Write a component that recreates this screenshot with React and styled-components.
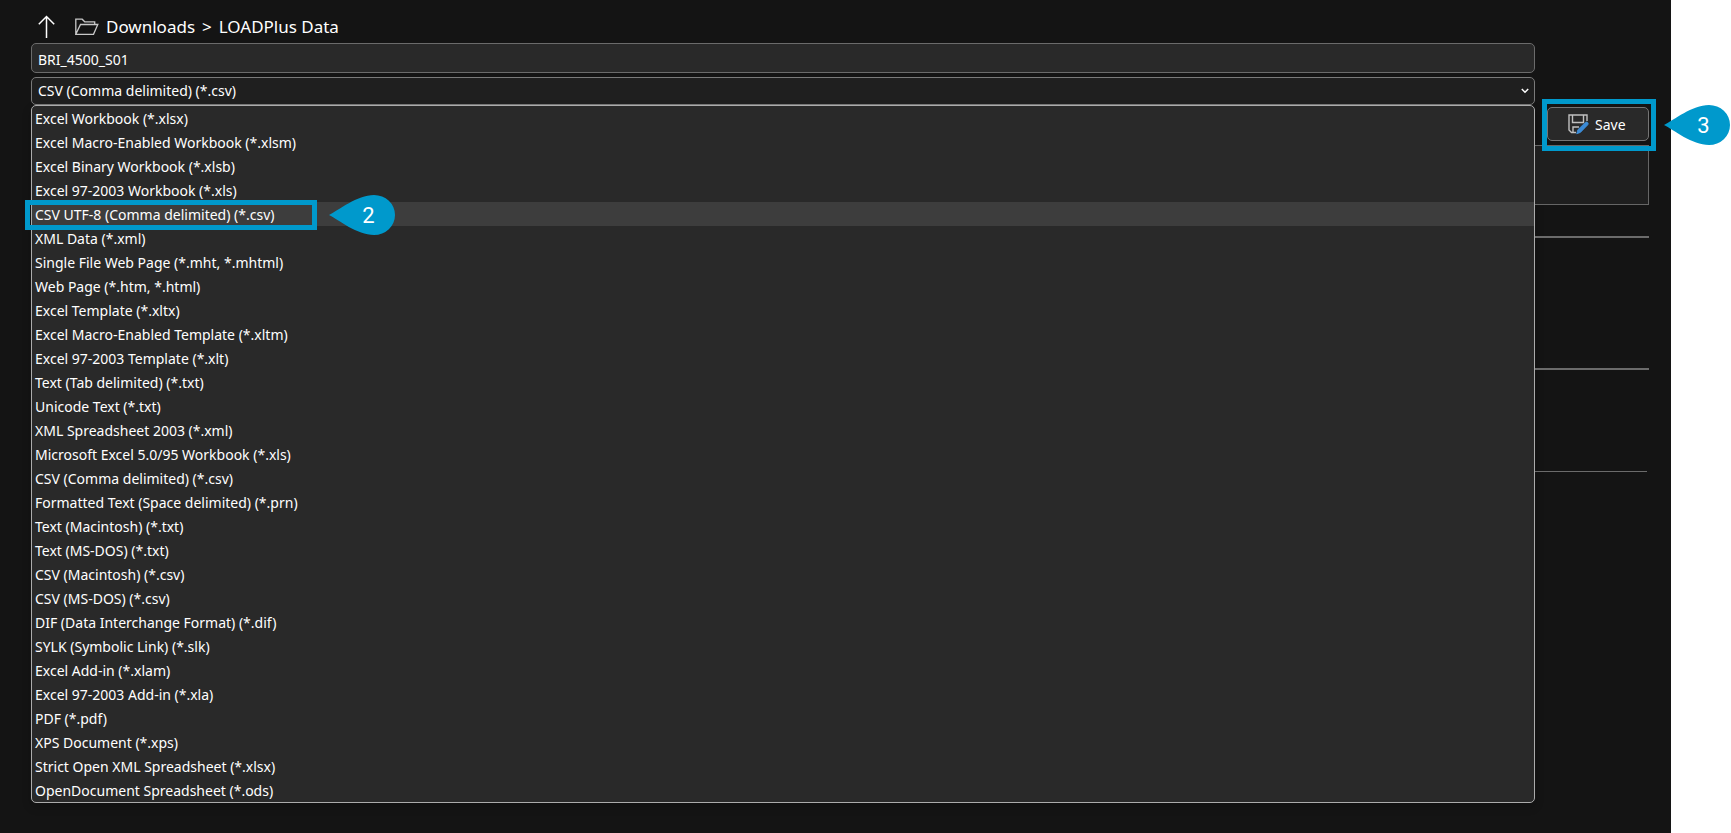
import styled, { createGlobalStyle } from "styled-components";
import { useState } from "react";

const fileTypes = [
    "Excel Workbook (*.xlsx)",
    "Excel Macro-Enabled Workbook (*.xlsm)",
    "Excel Binary Workbook (*.xlsb)",
    "Excel 97-2003 Workbook (*.xls)",
    "CSV UTF-8 (Comma delimited) (*.csv)",
    "XML Data (*.xml)",
    "Single File Web Page (*.mht, *.mhtml)",
    "Web Page (*.htm, *.html)",
    "Excel Template (*.xltx)",
    "Excel Macro-Enabled Template (*.xltm)",
    "Excel 97-2003 Template (*.xlt)",
    "Text (Tab delimited) (*.txt)",
    "Unicode Text (*.txt)",
    "XML Spreadsheet 2003 (*.xml)",
    "Microsoft Excel 5.0/95 Workbook (*.xls)",
    "CSV (Comma delimited) (*.csv)",
    "Formatted Text (Space delimited) (*.prn)",
    "Text (Macintosh) (*.txt)",
    "Text (MS-DOS) (*.txt)",
    "CSV (Macintosh) (*.csv)",
    "CSV (MS-DOS) (*.csv)",
    "DIF (Data Interchange Format) (*.dif)",
    "SYLK (Symbolic Link) (*.slk)",
    "Excel Add-in (*.xlam)",
    "Excel 97-2003 Add-in (*.xla)",
    "PDF (*.pdf)",
    "XPS Document (*.xps)",
    "Strict Open XML Spreadsheet (*.xlsx)",
    "OpenDocument Spreadsheet (*.ods)",
];

const GlobalStyle = createGlobalStyle`
    * {
        box-sizing: border-box;
    }

    body {
        margin: 0;
        background: #ffffff;
        color: #ffffff;
        font-family: "Noto Sans", "Open Sans", sans-serif;
        font-size: 14px;
    }
`;

const StyledPage = styled.div`
    padding-right: 60px;
`;

const StyledPanel = styled.main`
    min-height: 100vh;
    padding: 0 22px 30px 31px;
    background: #141414;
`;

const StyledHeader = styled.header`
    display: flex;
    align-items: center;
    height: 43px;
    padding: 10px 0 0 7px;
`;

const StyledUpButton = styled.button`
    display: flex;
    margin-right: 20px;
    padding: 0;
    border: none;
    background: none;
    color: #ffffff;
`;

const StyledPath = styled.nav`
    display: flex;
    align-items: center;
    gap: 7px;
    font-size: 17px;
    line-height: 24px;

    a {
        color: inherit;
        text-decoration: none;
    }
`;

const StyledBody = styled.div`
    display: grid;
    grid-template-columns: 1fr 114px;
`;

const StyledForm = styled.div`
    display: flex;
    flex-direction: column;
    min-width: 0;
`;

const StyledNameInput = styled.input`
    height: 30px;
    margin-bottom: 4px;
    padding: 2px 6px 0;
    border: 1px solid #6b6b6b;
    border-radius: 5px;
    background: #292929;
    color: inherit;
    font: inherit;
    outline: none;
`;

const StyledSelectBox = styled.div`
    display: grid;
    align-items: center;

    select,
    svg {
        grid-area: 1 / 1;
    }

    svg {
        justify-self: end;
        margin-right: 6px;
        pointer-events: none;
    }
`;

const StyledSelect = styled.select`
    appearance: none;
    width: 100%;
    height: 28px;
    padding: 0 6px 2px;
    border: 1px solid #7a7a7a;
    border-radius: 5px;
    background: #1f1f1f;
    color: inherit;
    font: inherit;
    outline: none;
`;

const StyledOptionList = styled.ul`
    margin: 0;
    padding: 0;
    border: 1px solid #ababab;
    border-radius: 5px;
    background: #292929;
    box-shadow: 0 4px 10px rgba(0, 0, 0, 0.2);
    list-style: none;
`;

const StyledOption = styled.li`
    position: relative;
    height: 24px;
    padding-left: 3px;
    background: ${({ $active }) => ($active ? "#3d3d3d" : "none")};
    line-height: 26px;
    cursor: default;
`;

const StyledAside = styled.aside`
    padding-top: 64px;
`;

const StyledSaveArea = styled.div`
    position: relative;
    margin-left: 12px;
`;

const StyledSaveButton = styled.button`
    display: flex;
    align-items: center;
    gap: 6px;
    width: 100%;
    height: 34px;
    padding: 0 0 0 20px;
    border: 1px solid #757575;
    border-radius: 5px;
    background: #292929;
    color: inherit;
    font: inherit;
`;

const StyledPreview = styled.div`
    height: 60px;
    margin: 4px 0 31px;
    border: 1px solid #666666;
    border-left: none;
    background: #1f1f1f;
`;

const StyledRule = styled.hr`
    height: ${({ $thin }) => ($thin ? "1px" : "2px")};
    margin: 0 ${({ $thin }) => ($thin ? "2px" : "0")} ${({ $space }) => $space}px 0;
    border: none;
    background: #6b6b6b;
`;

const StyledOutline = styled.span`
    position: absolute;
    border: 5px solid #0099cc;
    pointer-events: none;
`;

const StyledOptionOutline = styled(StyledOutline)`
    top: -2px;
    left: -7px;
    width: 292px;
    height: 30px;
`;

const StyledSaveOutline = styled(StyledOutline)`
    inset: -8px -7px -10px -5px;
`;

const StyledMarker = styled.span`
    position: absolute;
    top: 50%;
    left: ${({ $left }) => $left};
    width: 66px;
    height: 40px;
    margin-top: -19px;
    padding-left: 13px;
    color: #ffffff;
    font-family: Roboto, "Liberation Sans", sans-serif;
    font-size: 22px;
    line-height: 41px;
    text-align: center;

    svg {
        position: absolute;
        inset: 0;
    }

    b {
        position: relative;
        font-weight: 400;
    }
`;

const Marker = ({ step, left }) => (
    <StyledMarker $left={left}>
        <svg width="66" height="40" viewBox="0 0 66 40" fill="#0099cc">
            <path d="M0 20C10 15 28 0 45 0a21 20 0 0 1 0 40C28 40 10 25 0 20Z" />
        </svg>
        <b>{step}</b>
    </StyledMarker>
);

const UpIcon = () => (
    <svg width="17" height="24" viewBox="0 0 17 24" fill="none" stroke="currentColor" strokeWidth="1.500">
        <path d="M8.500 23V1.500M.8 9.300 8.500 1.500l7.700 7.800" />
    </svg>
);

const FolderIcon = () => (
    <svg width="24" height="18" viewBox="0 0 24 18" fill="none" stroke="#c8c8c8" strokeWidth="1.300">
        <path d="M.8 16.300V1.200h6.400l2.500 2.600h10v2.700M.8 16.300 5.500 6.500h17.300l-4.300 9.800H.8Z" />
    </svg>
);

const ChevronIcon = () => (
    <svg width="8" height="6" viewBox="0 0 8 6" fill="none" stroke="#ffffff" strokeWidth="1.500">
        <path d="m.8 1 3.200 3.200L7.200 1" />
    </svg>
);

const SaveIcon = () => (
    <svg width="21" height="21" viewBox="0 0 21 21" fill="none">
        <path
            d="M8 18.500H3.500L1 16V1h18v6M4.500 1v7.500H15.500V1M5 18.500v-5.500h6"
            stroke="#c0c0c0"
            strokeWidth="1.400"
        />
        <path
            d="m8.700 19.800 1.200-4.100 7.500-7.200c1.700-1.300 3.600.6 2.400 2.300l-7.400 7.600-3.700 1.400Z"
            fill="#3a8ad6"
            stroke="#3f93e0"
            strokeWidth=".8"
        />
    </svg>
);

export default function App() {
    const [fileName, setFileName] = useState("BRI_4500_S01");
    const [fileType, setFileType] = useState("CSV (Comma delimited) (*.csv)");
    const [activeIdx, setActiveIdx] = useState(4);

    return (
        <StyledPage>
            <GlobalStyle />
            <StyledPanel>
                <StyledHeader>
                    <StyledUpButton aria-label="Up one folder">
                        <UpIcon />
                    </StyledUpButton>
                    <StyledPath>
                        <FolderIcon />
                        <a href="#downloads">Downloads</a>
                        <span>&gt;</span>
                        <a href="#data">LOADPlus Data</a>
                    </StyledPath>
                </StyledHeader>
                <StyledBody>
                    <StyledForm>
                        <StyledNameInput
                            aria-label="File name"
                            value={fileName}
                            onChange={(e) => setFileName(e.target.value)}
                        />
                        <StyledSelectBox>
                            <StyledSelect
                                aria-label="File type"
                                value={fileType}
                                onChange={(e) => setFileType(e.target.value)}
                            >
                                {fileTypes.map((type) => (
                                    <option key={type}>{type}</option>
                                ))}
                            </StyledSelect>
                            <ChevronIcon />
                        </StyledSelectBox>
                        <StyledOptionList role="listbox" aria-label="File types">
                            {fileTypes.map((type, idx) => (
                                <StyledOption
                                    key={type}
                                    role="option"
                                    aria-selected={idx === activeIdx}
                                    $active={idx === activeIdx}
                                    onMouseEnter={() => setActiveIdx(idx)}
                                    onClick={() => setFileType(type)}
                                >
                                    {type}
                                    {idx === 4 ? (
                                        <>
                                            <StyledOptionOutline />
                                            <Marker step={2} left="297px" />
                                        </>
                                    ) : null}
                                </StyledOption>
                            ))}
                        </StyledOptionList>
                    </StyledForm>
                    <StyledAside>
                        <StyledSaveArea>
                            <StyledSaveButton>
                                <SaveIcon />
                                Save
                            </StyledSaveButton>
                            <StyledSaveOutline />
                            <Marker step={3} left="calc(100% + 15px)" />
                        </StyledSaveArea>
                        <StyledPreview />
                        <StyledRule $space={130} />
                        <StyledRule $space={101} />
                        <StyledRule $thin $space={0} />
                    </StyledAside>
                </StyledBody>
            </StyledPanel>
        </StyledPage>
    );
}
